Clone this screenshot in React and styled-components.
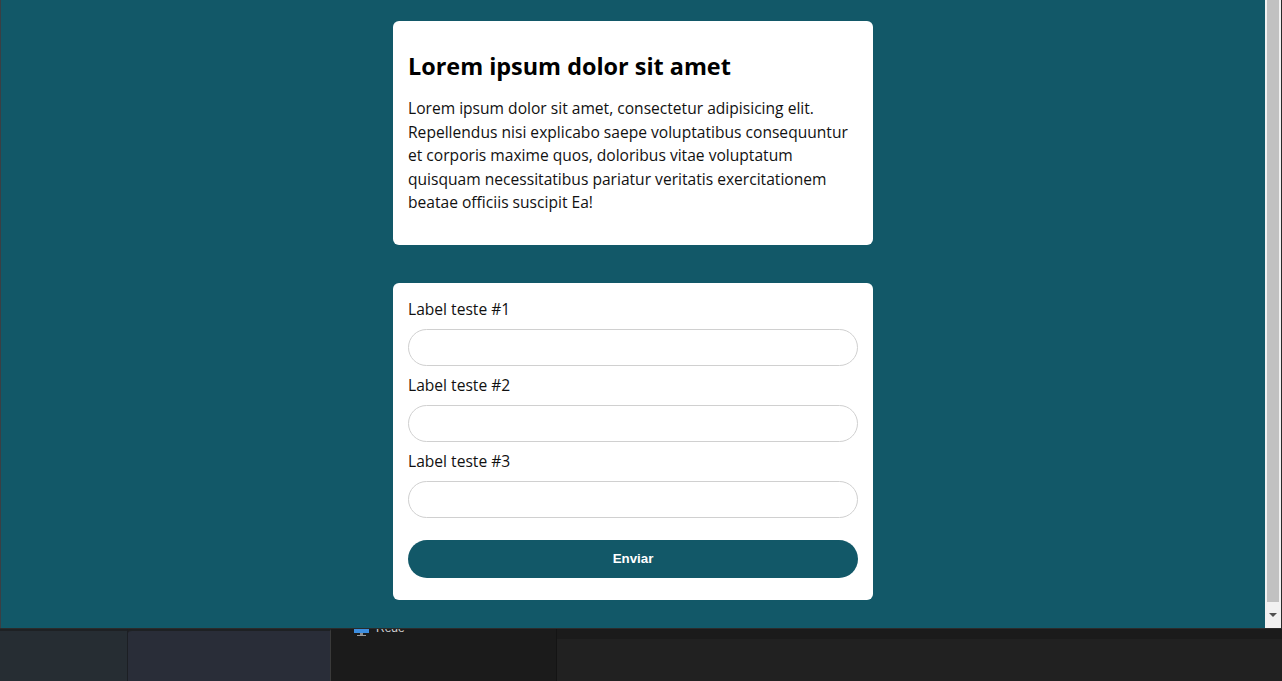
import React from "react";
import styled, { createGlobalStyle } from "styled-components";

const Global = createGlobalStyle`
  html, body { margin: 0; padding: 0; background: #212121; }
  body { font-family: "Open Sans", "Liberation Sans", sans-serif; overflow: hidden; }
  * { box-sizing: border-box; }
`;

const Screen = styled.div`
  width: 1282px;
  height: 681px;
  display: flex;
  flex-direction: column;
  overflow: hidden;
`;

const Viewport = styled.div`
  height: 628px;
  display: flex;
  position: relative;
  z-index: 1;
`;

const Page = styled.main`
  flex: 1;
  background: #125868;
  border-left: 1px solid #3a3f44;
  display: flex;
  flex-direction: column;
  align-items: center;
  padding-top: 21px;
  gap: 37.5px;
  overflow: hidden;
`;

const Card = styled.section`
  width: 480px;
  background: #ffffff;
  border-radius: 6px;
  padding: 15px;
  display: flex;
  flex-direction: column;
`;

const Title = styled.h2`
  margin: 14px 0 0;
  font-size: 23.4px;
  font-weight: 700;
  color: #000;
  line-height: 32px;
`;

const Text = styled.p`
  margin: 15px 0 15.5px;
  font-size: 15.6px;
  line-height: 23.5px;
  color: #111;
`;

const Label = styled.label`
  font-size: 15.6px;
  line-height: 22px;
  color: #111;
  margin-bottom: 9px;
`;

const Input = styled.input`
  height: 37px;
  width: 100%;
  border: 1px solid #d0d0d0;
  border-radius: 19px;
  background: #fff;
  outline: none;
  margin-bottom: 8px;
  padding: 0 14px;
  font-family: inherit;
`;

const Button = styled.button`
  margin-top: 14px;
  margin-bottom: 7px;
  height: 38px;
  width: 100%;
  border: none;
  border-radius: 19px;
  background: #125868;
  color: #fff;
  font-family: "Liberation Sans", Arial, sans-serif;
  font-size: 13.333px;
  font-weight: 700;
`;

const Scrollbar = styled.div`
  width: 17px;
  background: #f1f1f1;
  border-right: 1px solid #2a2a2a;
  display: flex;
  flex-direction: column;
  align-items: center;
`;

const Thumb = styled.div`
  width: 12px;
  height: 602px;
  background: #c1c1c1;
`;

const ArrowBox = styled.div`
  flex: 1;
  display: flex;
  align-items: center;
  justify-content: center;
`;

const Arrow = styled.div`
  width: 0;
  height: 0;
  border-left: 4px solid transparent;
  border-right: 4px solid transparent;
  border-top: 4px solid #505050;
`;

const Taskbar = styled.div`
  flex: 1;
  display: flex;
  background: #212121;
  border-top: 1px solid #2b2b2b;
`;

const Segment = styled.div`
  width: ${(p) => p.$w};
  flex: none;
  background: ${(p) => p.$bg};
  border-right: 1px solid ${(p) => p.$line || "#1a1a1a"};
  border-top: ${(p) => p.$top || "0"} solid #1e2124;
  border-top-left-radius: ${(p) => p.$r || "0"};
  display: flex;
  align-items: flex-start;
  gap: 7px;
  padding-left: ${(p) => p.$pl || "0"};
`;

const Band = styled.div`
  flex: 1;
  display: flex;
  flex-direction: column;
`;

const BandTop = styled.div`
  height: 10px;
  background: #1b1b1b;
`;

const Clip = styled.div`
  height: 6px;
  overflow: hidden;
  display: flex;
  align-items: flex-end;
  color: #cfcfcf;
  font-size: 12px;
  line-height: 14px;
  font-family: "Liberation Sans", Arial, sans-serif;
`;

const Monitor = () => (
  <svg width="15" height="7" viewBox="0 0 15 7">
    <rect x="0" y="0" width="15" height="4" fill="#3d8ee0" />
    <rect x="6" y="4" width="3" height="2" fill="#8a8a8a" />
    <rect x="3" y="6" width="9" height="1" fill="#9a9a9a" />
  </svg>
);

export default function App() {
  return (
    <Screen>
      <Global />
      <Viewport>
        <Page>
          <Card>
            <Title>Lorem ipsum dolor sit amet</Title>
            <Text>
              Lorem ipsum dolor sit amet, consectetur adipisicing elit.
              Repellendus nisi explicabo saepe voluptatibus consequuntur et
              corporis maxime quos, doloribus vitae voluptatum quisquam
              necessitatibus pariatur veritatis exercitationem beatae officiis
              suscipit Ea!
            </Text>
          </Card>
          <Card as="form" onSubmit={(e) => e.preventDefault()}>
            <Label>Label teste #1</Label>
            <Input type="text" />
            <Label>Label teste #2</Label>
            <Input type="text" />
            <Label>Label teste #3</Label>
            <Input type="text" />
            <Button type="submit">Enviar</Button>
          </Card>
        </Page>
        <Scrollbar>
          <Thumb />
          <ArrowBox>
            <Arrow />
          </ArrowBox>
        </Scrollbar>
      </Viewport>
      <Taskbar>
        <Segment $w="128px" $bg="#262d33" $top="2px" $line="#1c1f24" />
        <Segment $w="203px" $bg="#292d38" $top="2px" $r="4px" $line="#3a3a3a" />
        <Segment $w="226px" $bg="#1b1b1b" $line="#141414" $pl="23px">
          <Monitor />
          <Clip>
            <span>Rede</span>
          </Clip>
        </Segment>
        <Band>
          <BandTop />
        </Band>
      </Taskbar>
    </Screen>
  );
}
